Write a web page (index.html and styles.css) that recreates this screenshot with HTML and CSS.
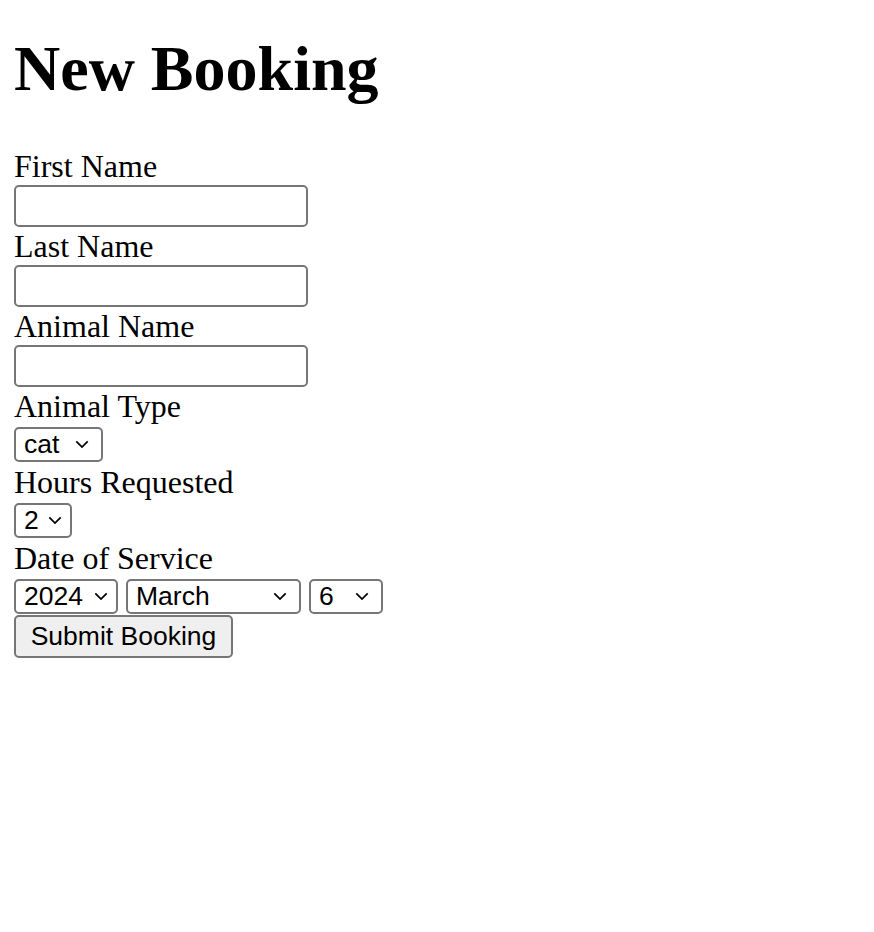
FILE: index.html
```html
<!DOCTYPE html>
<html lang="en">
    <head>
        <meta charset="UTF-8">
        <meta name="viewport" content="width=device-width, initial-scale=1.0">
        <title>New Booking</title>
        <link rel="stylesheet" href="styles.css">
    </head>
<body>
    <h1>New Booking</h1>

    <form class="booking-form">
        <label for="first_name">First Name</label>
        <input type="text" id="first_name" name="first_name">

        <label for="last_name">Last Name</label>
        <input type="text" id="last_name" name="last_name">

        <label for="animal_name">Animal Name</label>
        <input type="text" id="animal_name" name="animal_name">

        <label for="animal_type">Animal Type</label>
        <select id="animal_type" name="animal_type" class="select-type">
            <option value="cat">cat</option>
            <option value="dog">dog</option>
            <option value="bird">bird</option>
        </select>

        <label for="hours">Hours Requested</label>
        <select id="hours" name="hours" class="select-hours">
            <option>1</option>
            <option selected>2</option>
            <option>3</option>
            <option>4</option>
        </select>

        <label for="year">Date of Service</label>
        <div class="date-row">
            <select id="year" name="year" class="select-year">
                <option>2024</option>
                <option>2025</option>
            </select>
            <select id="month" name="month" class="select-month">
                <option>January</option>
                <option>February</option>
                <option selected>March</option>
                <option>April</option>
                <option>September</option>
            </select>
            <select id="day" name="day" class="select-day">
                <option>5</option>
                <option selected>6</option>
                <option>7</option>
                <option>30</option>
            </select>
        </div>

        <button type="submit">Submit Booking</button>
    </form>
</body>
</html>
```

FILE: styles.css
```css
body {
    font-family: 'Liberation Serif', 'Times New Roman', serif;
    margin: 0;
    padding: 0 14px;
    color: #000;
    background: #fff;
}

h1 {
    font-size: 64px;
    font-weight: bold;
    line-height: 74px;
    margin: 32px 0 41px;
}

.booking-form {
    display: flex;
    flex-direction: column;
    align-items: flex-start;
}

label {
    display: block;
    font-size: 32px;
    line-height: 38px;
    height: 38px;
}

input, select, button {
    font-family: 'Liberation Sans', Arial, sans-serif;
    font-size: 26.5px;
    color: #000;
    box-sizing: border-box;
    margin: 0;
}

input {
    width: 294px;
    height: 42px;
    border: 2px solid #767676;
    border-radius: 5px;
    padding: 2px 4px;
    background: #fff;
}

select {
    appearance: none;
    -webkit-appearance: none;
    height: 35px;
    margin: 2px 0 1px;
    padding: 0 30px 0 8px;
    border: 2px solid #767676;
    border-radius: 5px;
    background-color: #fff;
    background-image: url("data:image/svg+xml,%3Csvg xmlns='http://www.w3.org/2000/svg' width='16' height='10' viewBox='0 0 16 10'%3E%3Cpath d='M1.5 1.5l6.5 6.5 6.5-6.5' fill='none' stroke='%23000' stroke-width='2'/%3E%3C/svg%3E");
    background-repeat: no-repeat;
    background-position: right 12px center;
    background-size: 14px 9px;
    line-height: 31px;
}

.select-type {
    width: 89px;
}

.select-hours {
    width: 58px;
    padding-right: 20px;
    background-position: right 8px center;
}

.select-year {
    width: 104px;
    padding-right: 20px;
    background-position: right 8px center;
}

.select-month {
    width: 175px;
}

.select-day {
    width: 74px;
}

.date-row {
    display: flex;
    gap: 8px;
}

button {
    width: 219px;
    height: 43px;
    padding: 0;
    border: 2px solid #767676;
    border-radius: 5px;
    background: #efefef;
    cursor: pointer;
}
```
